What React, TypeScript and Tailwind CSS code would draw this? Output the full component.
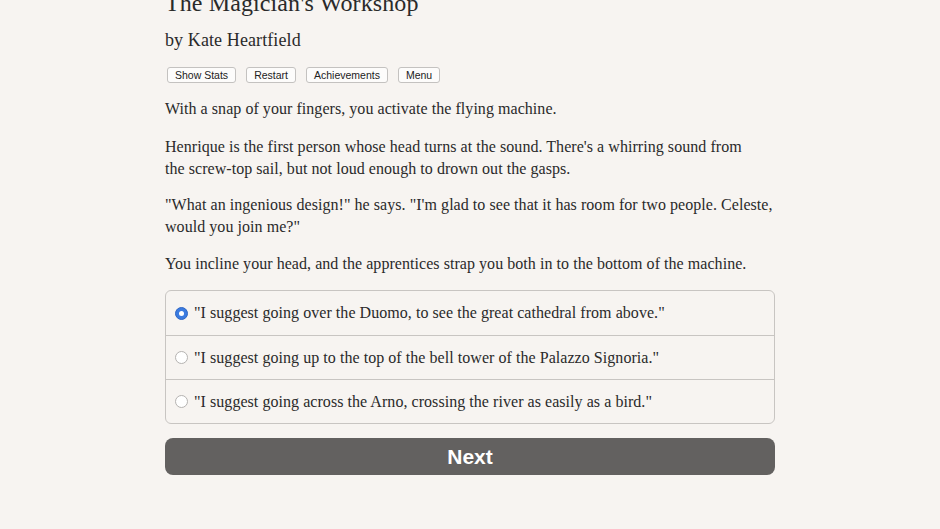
import React from "react";

const serif = { fontFamily: '"Palatino Linotype", Palatino, "Book Antiqua", "Liberation Serif", serif' };

const choices = [
  '"I suggest going over the Duomo, to see the great cathedral from above."',
  '"I suggest going up to the top of the bell tower of the Palazzo Signoria."',
  '"I suggest going across the Arno, crossing the river as easily as a bird."',
];

export default function App() {
  const [selected, setSelected] = React.useState(0);
  return (
    <div className="min-h-[529px] w-full bg-[#f7f4f1] text-[#2a2a2a] overflow-hidden">
      <div className="ml-[165px] w-[610px]" style={serif}>
        <h1 className="text-[24px] leading-[30px] mt-[-12px] font-normal tracking-[0.1px]">The Magician's Workshop</h1>
        <h2 className="text-[18px] leading-[24px] mt-[10px] tracking-[0.1px]">by Kate Heartfield</h2>
        <div className="flex gap-[10px] mt-[15px] ml-[2px] font-['Liberation_Sans',sans-serif]">
          {["Show Stats", "Restart", "Achievements", "Menu"].map((b) => (
            <button
              key={b}
              className="h-[16px] px-[7px] text-[10.5px] leading-[14px] bg-[#fdfcfb] border border-[#c4c2c0] rounded-[3px] text-[#222]"
            >
              {b}
            </button>
          ))}
        </div>
        <div className="text-[16px] leading-[22px] mt-[15px] tracking-[0.05px]">
          <p>With a snap of your fingers, you activate the flying machine.</p>
          <p className="mt-[16px]">
            Henrique is the first person whose head turns at the sound. There's a whirring sound from
            <br />
            the screw-top sail, but not loud enough to drown out the gasps.
          </p>
          <p className="mt-[14px]">
            "What an ingenious design!" he says. "I'm glad to see that it has room for two people. Celeste,
            <br />
            would you join me?"
          </p>
          <p className="mt-[15px]">You incline your head, and the apprentices strap you both in to the bottom of the machine.</p>
        </div>
        <div className="mt-[15px] border border-[#c8c5c2] rounded-[6px] overflow-hidden">
          {choices.map((c, i) => (
            <label
              key={i}
              className={`flex items-center h-[44px] pl-[9px] cursor-pointer ${i > 0 ? "border-t border-[#c8c5c2]" : ""}`}
              onClick={() => setSelected(i)}
            >
              <span
                className={`w-[13px] h-[13px] rounded-full mr-[6px] flex items-center justify-center shrink-0 ${
                  selected === i ? "bg-[#3b7be0] border border-[#2f66c4]" : "bg-white border border-[#b5b3b1]"
                }`}
              >
                {selected === i && <span className="w-[5px] h-[5px] rounded-full bg-white" />}
              </span>
              <span className="text-[16px] leading-[22px] tracking-[0.05px]">{c}</span>
            </label>
          ))}
        </div>
        <button className="mt-[14px] w-full h-[37px] rounded-[8px] bg-[#636160] text-white text-[21px] font-bold font-['Liberation_Sans',sans-serif] leading-[37px]">
          Next
        </button>
      </div>
    </div>
  );
}
